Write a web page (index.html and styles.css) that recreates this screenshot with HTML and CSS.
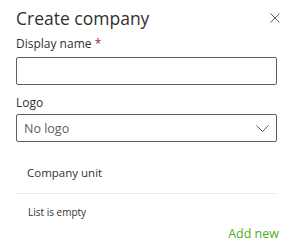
FILE: index.html
```html
<!DOCTYPE html>
<html lang="en">
<head>
    <meta charset="UTF-8">
    <title>Create company</title>
    <link rel="stylesheet" href="styles.css">
</head>
<body>
    <div class="panel">
        <div class="panel-header">
            <h1>Create company</h1>
            <button class="close-button" aria-label="Close">
                <svg width="10" height="10" viewBox="0 0 10 10">
                    <path d="M0.5 0.5 L9.5 9.5 M9.5 0.5 L0.5 9.5" stroke="#605e5c" stroke-width="1" fill="none"/>
                </svg>
            </button>
        </div>

        <label class="field-label">Display name <span class="required">*</span></label>
        <input class="text-input" type="text">

        <label class="field-label logo-label">Logo</label>
        <div class="dropdown">
            <span class="placeholder">No logo</span>
            <svg class="chevron" width="13" height="7" viewBox="0 0 13 7">
                <path d="M0.5 0.5 L6.5 6.5 L12.5 0.5" stroke="#605e5c" stroke-width="1" fill="none"/>
            </svg>
        </div>

        <div class="units">
            <div class="units-title">Company unit</div>
            <div class="units-empty">List is empty</div>
        </div>

        <div class="actions">
            <a href="#" class="add-new">Add new</a>
        </div>
    </div>
</body>
</html>
```

FILE: styles.css
```css
body {
    margin: 0;
    font-family: 'Open Sans', sans-serif;
    background: #fff;
    color: #323130;
}

.panel {
    padding: 4px 17px 0 16px;
}

.panel-header {
    display: flex;
    justify-content: space-between;
    align-items: center;
}

.panel-header h1 {
    margin: 0;
    font-size: 17.5px;
    font-weight: 400;
    line-height: 28px;
}

.close-button {
    background: none;
    border: none;
    padding: 0;
    margin-right: -8px;
    width: 20px;
    height: 20px;
    display: flex;
    align-items: center;
    justify-content: center;
}

.field-label {
    display: block;
    font-size: 12px;
    font-weight: 500;
    line-height: 20px;
    margin-top: 2px;
    padding-bottom: 3px;
}

.required {
    color: #a4262c;
}

.text-input {
    display: block;
    box-sizing: border-box;
    width: 100%;
    height: 28px;
    margin: 0;
    border: 1px solid #605e5c;
    border-radius: 2px;
}

.logo-label {
    margin-top: 8px;
    padding-bottom: 1px;
}

.dropdown {
    display: flex;
    justify-content: space-between;
    align-items: center;
    box-sizing: border-box;
    height: 28px;
    border: 1px solid #605e5c;
    border-radius: 2px;
    padding: 0 7px;
}

.placeholder {
    font-size: 12.5px;
    color: #605e5c;
}

.units {
    margin-top: 17px;
}

.units-title {
    font-size: 11.5px;
    line-height: 20px;
    padding: 4px 11px 10px;
    border-bottom: 1px solid #edebe9;
}

.units-empty {
    font-size: 10px;
    padding: 10px 12px 0;
    line-height: 16px;
}

.actions {
    display: flex;
    justify-content: flex-end;
    margin-top: 4px;
    margin-right: -2px;
}

.add-new {
    font-size: 12.5px;
    color: #4cae1c;
    text-decoration: none;
    line-height: 20px;
}
```
